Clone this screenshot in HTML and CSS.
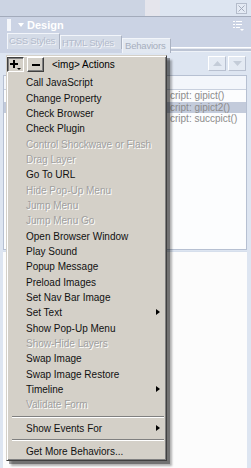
FILE: index.html
```html
<!DOCTYPE html>
<html lang="en">
<head>
    <meta charset="UTF-8">
    <title>Design - Behaviors</title>
    <link rel="stylesheet" href="styles.css">
</head>
<body>
    <div class="screen">
        <div class="topstrip">
            <div class="ts-left"></div>
            <div class="ts-mid"></div>
            <div class="ts-right">
                <span class="closebox">
                    <svg width="7" height="7" viewBox="0 0 7 7"><path d="M0.5 0.5 L6.5 6.5 M6.5 0.5 L0.5 6.5" stroke="#a4acbc" stroke-width="1"/></svg>
                </span>
            </div>
        </div>

        <div class="design">
            <div class="design-head">
                <span class="grip"></span>
                <span class="twisty"></span>
                <span class="title">Design</span>
                <svg class="opts" width="11" height="11" viewBox="0 0 11 11">
                    <path d="M0 1.5 H2 M3 1.5 H9 M0 4.5 H2 M3 4.5 H9 M0 7.5 H2 M3 7.5 H7" stroke="#fff" stroke-width="1"/>
                    <path d="M7 9 H11 L9 11 Z" fill="#fff"/>
                </svg>
            </div>

            <div class="tabs">
                <div class="tab tab-css">CSS Styles</div>
                <div class="tab tab-html">HTML Styles</div>
                <div class="tab tab-active">Behaviors</div>
                <div class="tab-rule"></div>
            </div>

            <div class="body">
                <div class="toolbar">
                    <span class="arrow-btn">
                        <svg width="9" height="5" viewBox="0 0 9 5"><path d="M4.5 0 L9 5 H0 Z" fill="#c4ccd8"/></svg>
                    </span>
                    <span class="arrow-btn">
                        <svg width="9" height="5" viewBox="0 0 9 5"><path d="M0 0 H9 L4.5 5 Z" fill="#c4ccd8"/></svg>
                    </span>
                </div>

                <div class="list">
                    <div class="list-head"></div>
                    <!-- left part of each row sits under the popup -->
                    <div class="list-row"><span class="ev"></span><span class="act">cript: gipict()</span></div>
                    <div class="list-row selected"><span class="ev"></span><span class="act">cript: gipict2()</span></div>
                    <div class="list-row"><span class="ev"></span><span class="act">cript: succpict()</span></div>
                </div>
                <div class="lower"></div>
            </div>
        </div>

        <!-- popup opened from the + button -->
        <div class="menu">
            <div class="menu-head">
                <span class="btn btn-down">
                    <svg width="11" height="11" viewBox="0 0 11 11">
                        <path d="M4 1 V9 M0 5 H8" stroke="#000" stroke-width="2"/>
                        <path d="M7 9 H11 L9 11 Z" fill="#000"/>
                    </svg>
                </span>
                <span class="btn">
                    <svg width="8" height="2" viewBox="0 0 8 2"><rect width="8" height="2" fill="#000"/></svg>
                </span>
                <span class="menu-label">&lt;img&gt; Actions</span>
            </div>
            <ul class="items">
                <li>Call JavaScript</li>
                <li>Change Property</li>
                <li>Check Browser</li>
                <li>Check Plugin</li>
                <li class="off">Control Shockwave or Flash</li>
                <li class="off">Drag Layer</li>
                <li>Go To URL</li>
                <li class="off">Hide Pop-Up Menu</li>
                <li class="off">Jump Menu</li>
                <li class="off">Jump Menu Go</li>
                <li>Open Browser Window</li>
                <li>Play Sound</li>
                <li>Popup Message</li>
                <li>Preload Images</li>
                <li>Set Nav Bar Image</li>
                <li class="sub">Set Text</li>
                <li>Show Pop-Up Menu</li>
                <li class="off">Show-Hide Layers</li>
                <li>Swap Image</li>
                <li>Swap Image Restore</li>
                <li class="sub">Timeline</li>
                <li class="off">Validate Form</li>
                <li class="sep"></li>
                <li class="sub">Show Events For</li>
                <li class="sep"></li>
                <li>Get More Behaviors...</li>
            </ul>
        </div>
    </div>
</body>
</html>
```

FILE: styles.css
```css
* {
    margin: 0;
    padding: 0;
    box-sizing: border-box;
}

body {
    font-family: 'Liberation Sans', Arial, sans-serif;
    font-size: 10px;
    background-color: #dde5f1;
}

.screen {
    position: relative;
    width: 251px;
    height: 468px;
    overflow: hidden;
    background-color: #dde5f1;
}

/* strip above the Design panel */
.topstrip {
    display: flex;
    height: 17px;
    border-bottom: 1px solid #a3abbb;
}

.ts-left {
    width: 145px;
    background-color: #ccd4e3;
}

.ts-mid {
    width: 15px;
    background-color: #e5e5ec;
}

.ts-right {
    flex: 1;
    display: flex;
    justify-content: flex-end;
    padding: 3px 4px 0 0;
    background-color: #dde5f1;
}

.closebox {
    display: flex;
    align-items: center;
    justify-content: center;
    width: 11px;
    height: 11px;
    border: 1px solid #b4bccb;
    background-color: #e4eaf4;
}

/* panel header */
.design-head {
    display: flex;
    align-items: center;
    height: 16px;
    padding-left: 7px;
    background-color: #cbd3e4;
}

.grip {
    width: 4px;
    height: 12px;
    background-image: radial-gradient(circle, #f4f6fa 0.8px, transparent 1px);
    background-size: 2px 2px;
}

.twisty {
    width: 0;
    height: 0;
    margin-left: 7px;
    border-left: 3px solid transparent;
    border-right: 3px solid transparent;
    border-top: 4px solid #fff;
}

.title {
    margin-left: 3px;
    color: #fff;
    font-size: 11px;
    font-weight: bold;
}

.opts {
    margin-left: auto;
    margin-right: 7px;
}

/* tabs */
.tabs {
    display: flex;
    align-items: flex-end;
    height: 20px;
    padding-left: 7px;
    background-color: #cbd3e4;
}

.tab {
    padding-left: 1px;
    border-top: 1px solid #f2f5fa;
    border-left: 1px solid #f2f5fa;
    border-right: 1px solid #aab2c2;
    color: #b2bacb;
    text-shadow: 1px 1px 0 #f4f6fa;
    font-size: 9.5px;
    letter-spacing: -0.2px;
    line-height: 13px;
    white-space: nowrap;
    overflow: hidden;
}

.tab-css {
    width: 53px;
    height: 16px;
    margin-bottom: 4px;
    background-color: #d4dbe7;
}

.tab-html {
    width: 62px;
    height: 14px;
    margin-bottom: 4px;
    background-color: #d4dbe7;
}

.tab-active {
    width: 49px;
    height: 15px;
    padding-left: 2px;
    background-color: #e2e8f1;
    color: #a6aebd;
    text-shadow: none;
    line-height: 14px;
}

.tab-rule {
    flex: 1;
    height: 6px;
    background: linear-gradient(#ffffff 0 1px, #e4e8f0 1px 2px, #bcc4d4 2px 4px, #eef2f8 4px 5px, #dde5f1 5px);
}

/* panel body */
.body {
    background-color: #dde5f1;
}

.toolbar {
    display: flex;
    justify-content: flex-end;
    gap: 2px;
    height: 22px;
    padding: 3px 5px 0 0;
}

.arrow-btn {
    display: flex;
    align-items: center;
    justify-content: center;
    width: 18px;
    height: 15px;
    border: 1px solid #b8c0d0;
    border-top-color: #fff;
    border-left-color: #fff;
    background-color: #e4eaf3;
}

.list {
    height: 175px;
    margin: 0 4px 0 3px;
    border: 1px solid #b6c0d2;
    background-color: #fcfdfe;
}

.list-head {
    height: 14px;
    border-bottom: 1px solid #c8d0de;
    background-color: #f3f6fb;
}

.list-row {
    display: flex;
    height: 11.5px;
    line-height: 11.5px;
    color: #8c8c8c;
    white-space: nowrap;
}

.list-row.selected {
    background-color: #c3cbdb;
}

.ev {
    width: 166px;
}

.lower {
    height: 220px;
    margin: 1px 4px 0 3px;
    border-top: 1px solid #d6dfec;
    background-color: #fcfcfc;
}

/* popup menu */
.menu {
    position: absolute;
    left: 6px;
    top: 55px;
    width: 161px;
    padding-bottom: 1px;
    border: 1px solid #404040;
    border-top-color: #d4d0c8;
    border-left-color: #d4d0c8;
    background-color: #d4d0c8;
    box-shadow: inset 1px 1px 0 #fff, inset -1px -1px 0 #808080, 3px 3px 0 rgba(0, 0, 0, 0.35), 5px 5px 2px rgba(0, 0, 0, 0.3);
}

.menu-head {
    display: flex;
    align-items: flex-start;
    height: 19.33px;
    padding-top: 1px;
}

.btn {
    display: flex;
    align-items: center;
    justify-content: center;
    width: 17px;
    height: 15px;
    margin-left: 3px;
    border: 1px solid #404040;
    border-top-color: #fff;
    border-left-color: #fff;
    box-shadow: inset -1px -1px 0 #808080;
}

.btn-down {
    margin-left: 0;
    border-color: #fff;
    border-top-color: #404040;
    border-left-color: #404040;
    box-shadow: inset 1px 1px 0 #808080;
}

.menu-label {
    margin-left: 8px;
    line-height: 15px;
    color: #000;
}

.items {
    list-style: none;
}

.items li {
    position: relative;
    height: 15.33px;
    padding-left: 19px;
    line-height: 15.33px;
    color: #111;
    white-space: nowrap;
}

.items li.off {
    color: #a0a0a0;
    text-shadow: 1px 1px 0 #fff;
}

.items li.sub::after {
    content: "";
    position: absolute;
    right: 6px;
    top: 4px;
    border-top: 3.5px solid transparent;
    border-bottom: 3.5px solid transparent;
    border-left: 4px solid #000;
}

.items li.sep {
    height: 2px;
    margin: 3px 2px 3px 5px;
    padding: 0;
    border-top: 1px solid #808080;
    border-bottom: 1px solid #fff;
}
```
